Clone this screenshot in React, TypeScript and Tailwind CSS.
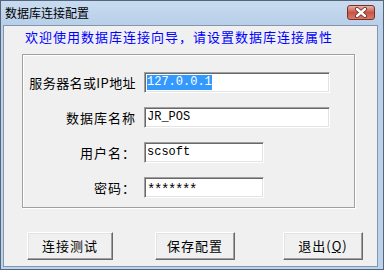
import React from "react";

const cjk = { fontFamily: '"Noto Sans CJK SC", "Noto Sans", sans-serif' };
const mono = { fontFamily: '"Liberation Mono", "DejaVu Sans Mono", monospace' };

function Field({
  label,
  value,
  width,
  selected,
  tight,
  password,
}: {
  label: string;
  value: string;
  width: string;
  selected?: boolean;
  tight?: boolean;
  password?: boolean;
}) {
  return (
    <div className="flex items-center h-[21px]">
      <div
        className={`w-[113px] text-right text-[13px] ${tight ? "tracking-[0.4px]" : "tracking-[1px]"} text-black leading-[21px] whitespace-nowrap`}
        style={cjk}
      >
        {label}
      </div>
      <div
        className={`ml-[8px] h-[21px] ${width} bg-white border border-t-[#a0a0a0] border-l-[#a0a0a0] border-b-[#ffffff] border-r-[#ffffff] shadow-[inset_1px_1px_0_#696969,inset_-1px_-1px_0_#e3e3e3] flex items-center pl-[2px]`}
      >
        {password ? (
          <span className="text-[14px] leading-[15px] tracking-[-1.4px] text-black relative top-[3px]" style={mono}>
            {value}
          </span>
        ) : (
          <span
            className={`text-[12px] leading-[15px] ${selected ? "bg-[#3399ff] text-white" : "text-black"}`}
            style={mono}
          >
            {value}
          </span>
        )}
      </div>
    </div>
  );
}

function Btn({ children, w, ml }: { children: React.ReactNode; w: string; ml: string }) {
  return (
    <div
      className={`${w} ${ml} h-[28px] bg-[#f0f0f0] border border-t-white border-l-white border-b-[#696969] border-r-[#696969] shadow-[inset_-1px_-1px_0_#a0a0a0,inset_1px_1px_0_#e3e3e3] flex items-center justify-center text-[13px] tracking-[1px] text-black`}
      style={cjk}
    >
      {children}
    </div>
  );
}

export default function App() {
  return (
    <div className="w-[384px] h-[270px] bg-[#bcd2ea] border border-[#56667a] flex flex-col overflow-hidden">
      <div className="h-[24px] flex items-start shrink-0 bg-gradient-to-b from-[#c8dbf0] to-[#b9cfe8]">
        <div className="pl-[4px] pt-[4px] text-[12px] leading-[16px] text-black" style={cjk}>
          数据库连接配置
        </div>
        <div className="ml-auto mr-[8px] mt-[4px] w-[28px] h-[15px] rounded-[3px] border border-[#7a3026] bg-gradient-to-b from-[#e6b2a6] via-[#c85446] to-[#d77a6b] flex items-center justify-center">
          <svg width="14" height="11" viewBox="0 0 14 11">
            <path d="M3 2 L11 9 M11 2 L3 9" stroke="#6b2a22" strokeWidth="4" strokeLinecap="round" />
            <path d="M3 2 L11 9 M11 2 L3 9" stroke="#ffffff" strokeWidth="2.4" strokeLinecap="round" />
          </svg>
        </div>
      </div>
      <div className="ml-[2px] mr-[5px] mb-[2px] flex-1 bg-[#f0f0f0] border border-[#8197b0] flex flex-col">
        <div className="mt-[2px] ml-[21px] h-[17px] leading-[17px] text-[13px] tracking-[1px] text-[#0000ff] whitespace-nowrap" style={cjk}>
          欢迎使用数据库连接向导，请设置数据库连接属性
        </div>
        <div className="mt-[9px] ml-[18px] w-[333px] h-[154px] border border-[#a0a0a0] shadow-[inset_1px_1px_0_#ffffff,1px_1px_0_#ffffff] pt-[17px] flex flex-col gap-[14px]">
          <Field label="服务器名或IP地址" value="127.0.0.1" width="w-[186px]" selected tight />
          <Field label="数据库名称" value="JR_POS" width="w-[186px]" />
          <Field label="用户名：" value="scsoft" width="w-[120px]" />
          <Field label="密码：" value="*******" width="w-[120px]" password />
        </div>
        <div className="mt-[24px] flex">
          <Btn w="w-[86px]" ml="ml-[23px]">连接测试</Btn>
          <Btn w="w-[80px]" ml="ml-[42px]">保存配置</Btn>
          <Btn w="w-[80px]" ml="ml-[48px]">
            <span>退出(<span className="underline">Q</span>)</span>
          </Btn>
        </div>
      </div>
    </div>
  );
}
